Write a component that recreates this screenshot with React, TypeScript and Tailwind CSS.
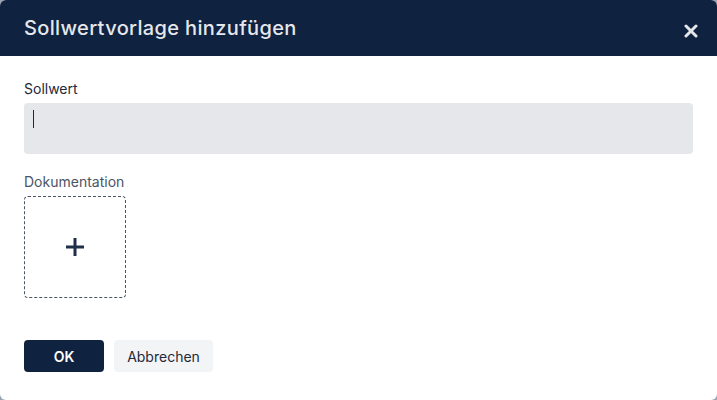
export default function App() {
  return (
    <div className="w-[717px] h-[400px] bg-[#9aa5b4] font-['Inter','Liberation_Sans',sans-serif]">
      <div className="w-full h-full bg-white rounded-md overflow-hidden flex flex-col">
        <div className="h-14 bg-[#0f2240] flex items-center justify-between pl-6 pr-[19px]">
          <h2 className="text-[20px] font-medium text-[#e5e7eb] tracking-[0.35px]">
            Sollwertvorlage hinzufügen
          </h2>
          <button className="flex items-center justify-center mt-[6px]">
            <svg width="14" height="14" viewBox="0 0 14 14">
              <path
                d="M2 2 L12 12 M12 2 L2 12"
                stroke="#e5e7eb"
                strokeWidth="3"
                strokeLinecap="round"
              />
            </svg>
          </button>
        </div>
        <div className="px-6 pt-[23px] flex flex-col">
          <label className="text-[14px] text-[#1e293b] leading-5">Sollwert</label>
          <div className="mt-[4px] h-[51px] bg-[#e5e7eb] rounded flex items-start pt-[7px] pl-[9px]">
            <div className="w-px h-[18px] bg-[#1e293b]" />
          </div>
          <label className="mt-[18px] text-[14px] text-[#4b5563] leading-5">Dokumentation</label>
          <div className="mt-[4px] w-[102px] h-[102px] border border-dashed border-[#4b5563] rounded flex items-center justify-center">
            <svg width="20" height="20" viewBox="0 0 20 20">
              <path d="M10 1 V19 M1 10 H19" stroke="#1e2f4a" strokeWidth="3" />
            </svg>
          </div>
          <div className="mt-[42px] flex gap-[10px]">
            <button className="w-20 h-8 bg-[#0f2240] text-white text-[14px] font-semibold rounded">
              OK
            </button>
            <button className="w-[99px] h-8 bg-[#f3f4f6] text-[#1e293b] text-[14px] font-normal rounded">
              Abbrechen
            </button>
          </div>
        </div>
      </div>
    </div>
  );
}
